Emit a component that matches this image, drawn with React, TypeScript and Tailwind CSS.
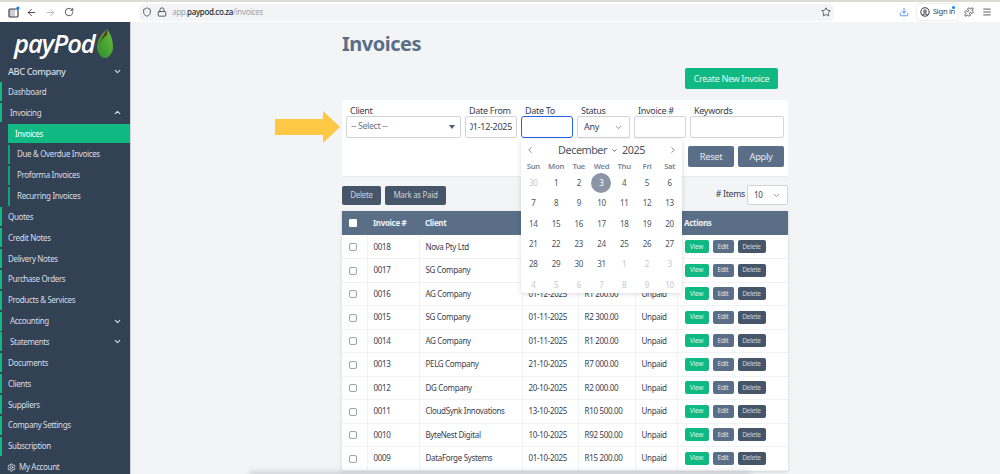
import {
  ArrowLeft,
  ArrowRight,
  ChevronDown,
  ChevronLeft,
  ChevronRight,
  ChevronUp,
  CircleUser,
  Download,
  Lock,
  Menu,
  Puzzle,
  RotateCw,
  Settings,
  Shield,
  Star,
} from "lucide-react";

const NAV = [
  { label: "Dashboard" },
  { label: "Invoicing", chevron: "up", indent: true },
  { label: "Invoices", sub: true, active: true },
  { label: "Due & Overdue Invoices", sub: true },
  { label: "Proforma Invoices", sub: true },
  { label: "Recurring Invoices", sub: true },
  { label: "Quotes" },
  { label: "Credit Notes" },
  { label: "Delivery Notes" },
  { label: "Purchase Orders" },
  { label: "Products & Services" },
  { label: "Accounting", chevron: "down", indent: true },
  { label: "Statements", chevron: "down", indent: true },
  { label: "Documents" },
  { label: "Clients" },
  { label: "Suppliers" },
  { label: "Company Settings" },
  { label: "Subscription" },
];

// the date picker covers date, total and status on the first two rows
const INVOICES = [
  { no: "0018", client: "Nova Pty Ltd", date: "", total: "", status: "" },
  { no: "0017", client: "SG Company", date: "", total: "", status: "" },
  { no: "0016", client: "AG Company", date: "01-12-2025", total: "R1 200.00", status: "Unpaid" },
  { no: "0015", client: "SG Company", date: "01-11-2025", total: "R2 300.00", status: "Unpaid" },
  { no: "0014", client: "AG Company", date: "01-11-2025", total: "R1 200.00", status: "Unpaid" },
  { no: "0013", client: "PELG Company", date: "21-10-2025", total: "R7 000.00", status: "Unpaid" },
  { no: "0012", client: "DG Company", date: "20-10-2025", total: "R2 000.00", status: "Unpaid" },
  { no: "0011", client: "CloudSynk Innovations", date: "13-10-2025", total: "R10 500.00", status: "Unpaid" },
  { no: "0010", client: "ByteNest Digital", date: "10-10-2025", total: "R92 500.00", status: "Unpaid" },
  { no: "0009", client: "DataForge Systems", date: "01-10-2025", total: "R15 200.00", status: "Unpaid" },
];

const WEEKDAYS = ["Sun", "Mon", "Tue", "Wed", "Thu", "Fri", "Sat"];

const CALENDAR = [
  30, 1, 2, 3, 4, 5, 6, 7, 8, 9, 10, 11, 12, 13, 14, 15, 16, 17, 18, 19, 20, 21, 22, 23, 24, 25, 26,
  27, 28, 29, 30, 31, 1, 2, 3, 4, 5, 6, 7, 8, 9, 10,
];

function BrowserBar() {
  return (
    <header className="flex h-[22px] shrink-0 items-center border-t-2 border-[#dedbd5] bg-white text-[#3f3f46]">
      <svg className="ml-[8px] h-[12px] w-[12px]" viewBox="0 0 12 12" fill="none">
        <rect x="1" y="3" width="9" height="8" rx="1" stroke="#3f3f46" strokeWidth="1.2" />
        <rect x="1" y="3" width="6" height="8" fill="#3f3f46" opacity="0.25" />
        <circle cx="10" cy="2" r="1.6" fill="#0a84ff" />
      </svg>
      <ArrowLeft className="ml-[5.5px] h-[11px] w-[11px]" />
      <ArrowRight className="ml-[8px] h-[11px] w-[11px] text-[#b4b4b8]" />
      <RotateCw className="ml-[8.5px] h-[10px] w-[10px]" />
      <div className="ml-[65px] flex h-[17px] w-[695px] items-center rounded-[5px] bg-[#f3f4f6] pl-[3px] pr-[3px]">
        <Shield className="h-[10px] w-[10px]" />
        <Lock className="ml-[5px] h-[10px] w-[10px]" />
        <span className="ml-[5px] text-[8px] tracking-[-0.35px] text-[#9ca3af]">
          app.<span className="font-medium text-[#27272a]">paypod.co.za</span>/invoices
        </span>
        <Star className="ml-auto h-[10px] w-[10px]" />
      </div>
      <Download className="ml-[65px] h-[10px] w-[10px] text-[#3b82f6]" />
      <div className="relative ml-[7px] flex h-[18px] w-[43px] items-center rounded-[4px] border border-[#eeeeee] pl-[3px]">
        <CircleUser className="h-[10px] w-[10px]" strokeWidth={2.5} />
        <span className="ml-[3px] text-[7.6px] tracking-[-0.3px]">Sign in</span>
        <span className="absolute right-[3px] top-[2px] h-[3px] w-[3px] rounded-full bg-[#0a84ff]" />
      </div>
      <Puzzle className="ml-[5px] h-[10px] w-[10px]" />
      <Menu className="ml-[8px] h-[10px] w-[10px]" />
    </header>
  );
}

function Sidebar() {
  return (
    <aside className="flex w-[131px] shrink-0 flex-col border-r border-[#d1d5db] bg-[#334155] text-[8px] tracking-[-0.35px] text-[#d8dde4]">
      <div className="flex h-[41px] shrink-0 items-center pl-[14px] pt-[2px]">
        <span className="font-['Open_Sans',sans-serif] text-[25.5px] font-semibold italic leading-none tracking-[-1px] text-white">
          payPod
        </span>
        <svg className="ml-[1px] h-[31px] w-[18px]" viewBox="0 0 18 31">
          <defs>
            <linearGradient id="leaf" x1="1" y1="0" x2="0" y2="1">
              <stop offset="0" stopColor="#6cc03a" />
              <stop offset="1" stopColor="#2a8a2e" />
            </linearGradient>
          </defs>
          <path d="M11 1C5 7 1 12 1 19c0 6 4 11 8 11s8-5 8-11C17 12 15 6 11 1Z" fill="url(#leaf)" />
          <path d="M11 1C8 7 5 10 3 17c2-5 5-8 8-10 0-2 1-4 0-6Z" fill="#5a3a1e" />
        </svg>
      </div>
      <div className="flex h-[17.5px] shrink-0 items-center justify-between pl-[8px] pr-[8px] text-[9.2px] font-medium tracking-[-0.4px]">
        ABC Company
        <ChevronDown className="h-[9px] w-[9px]" strokeWidth={3} />
      </div>
      <nav className="flex flex-col">
        {NAV.map((item) => (
          <div
            key={item.label}
            className={
              item.sub
                ? item.active
                  ? "ml-[8px] mt-[1.85px] flex h-[19px] items-center bg-[#10b981] pl-[7px] text-white"
                  : "ml-[8px] mt-[1.85px] flex h-[19px] items-center border-l-2 border-[#10a37f] pl-[7px]"
                : "mt-[1.85px] flex h-[19px] items-center justify-between border-l-2 border-[#10b981] pr-[8px]"
            }
          >
            <span className={item.sub ? "" : item.indent ? "pl-[8px]" : "pl-[6px]"}>{item.label}</span>
            {item.chevron === "up" && <ChevronUp className="h-[9px] w-[9px]" strokeWidth={3} />}
            {item.chevron === "down" && <ChevronDown className="h-[9px] w-[9px]" strokeWidth={3} />}
          </div>
        ))}
      </nav>
      <div className="mt-[2px] flex h-[19px] shrink-0 items-center pl-[7px]">
        <Settings className="h-[9px] w-[9px]" strokeWidth={2.5} />
        <span className="ml-[3px]">My Account</span>
      </div>
    </aside>
  );
}

function Field({ label, width, children }: { label: string; width: string; children?: React.ReactNode }) {
  return (
    <div className={width}>
      <div className="ml-[4px] h-[16px] text-[9px] leading-[21px] tracking-[-0.3px] text-[#374151]">{label}</div>
      {children}
    </div>
  );
}

function DatePicker() {
  return (
    <div className="absolute left-[179px] top-[39px] z-10 h-[154px] w-[161px] rounded-[3px] bg-white px-[1px] shadow-[0_1px_5px_rgba(0,0,0,0.15)]">
      <div className="flex h-[21px] items-center justify-between px-[3px] pt-[1px] text-[#6b7280]">
        <ChevronLeft className="h-[10px] w-[10px]" />
        <div className="flex items-center text-[10.8px] tracking-[-0.45px] text-[#4b5563]">
          December
          <ChevronDown className="mx-[4px] h-[7px] w-[7px]" strokeWidth={3} />
          2025
        </div>
        <ChevronRight className="h-[10px] w-[10px]" />
      </div>
      <div className="grid h-[13px] grid-cols-7 items-center text-center text-[7.7px] font-semibold tracking-[-0.3px] text-[#7b8494]">
        {WEEKDAYS.map((d) => (
          <span key={d}>{d}</span>
        ))}
      </div>
      <div className="grid grid-cols-7 text-center text-[8px] tracking-[-0.3px] text-[#4b5563]">
        {CALENDAR.map((day, i) => {
          const muted = i === 0 || i > 31;
          return (
            <span key={i} className="flex h-[20.3px] items-center justify-center">
              {i === 3 ? (
                <span className="flex h-[20px] w-[20px] items-center justify-center rounded-full bg-[#8b95a5] text-white">
                  {day}
                </span>
              ) : (
                <span className={muted ? "text-[#c4c8ce]" : ""}>{day}</span>
              )}
            </span>
          );
        })}
      </div>
    </div>
  );
}

function Filters() {
  const box = "h-[22px] rounded-[2px] border border-[#d1d5db] bg-white";
  return (
    <div className="mt-[11px] h-[76px] bg-white pl-[4px] pr-[4px] shadow-[0_1px_1px_rgba(0,0,0,0.04)]">
      <div className="flex gap-[4px]">
        <Field label="Client" width="w-[115px]">
          <div className={`${box} flex items-center justify-between pl-[4px] pr-[5px] text-[8.8px] tracking-[-0.35px] text-[#6b7280]`}>
            -- Select --
            <span className="h-0 w-0 border-x-[3.5px] border-t-[4px] border-x-transparent border-t-[#4b5e75]" />
          </div>
        </Field>
        <Field label="Date From" width="w-[52px]">
          <div className={`${box} flex items-center justify-end overflow-hidden px-[4px] text-[9px] tracking-[-0.3px] text-[#374151]`}>
            <span className="overflow-hidden">
              <span className="float-right whitespace-nowrap">01-12-2025</span>
            </span>
          </div>
        </Field>
        <Field label="Date To" width="w-[52px]">
          <div className="h-[22px] rounded-[3px] border-[1.5px] border-[#2563eb] bg-white" />
        </Field>
        <Field label="Status" width="w-[53px]">
          <div className={`${box} flex items-center justify-between pl-[6px] pr-[6px] text-[9px] tracking-[-0.3px] text-[#374151]`}>
            Any
            <ChevronDown className="h-[9px] w-[9px] text-[#6b7280]" />
          </div>
        </Field>
        <Field label="Invoice #" width="w-[52px]">
          <div className={box} />
        </Field>
        <Field label="Keywords" width="w-[94px]">
          <div className={box} />
        </Field>
      </div>
      <div className="mt-[8px] flex justify-end gap-[4px]">
        <button className="h-[21px] w-[46px] rounded-[2px] bg-[#5a6f87] text-[9.3px] tracking-[-0.35px] text-[#e5e9ee]">Reset</button>
        <button className="h-[21px] w-[46px] rounded-[2px] bg-[#5a6f87] text-[9.3px] tracking-[-0.35px] text-[#e5e9ee]">Apply</button>
      </div>
    </div>
  );
}

function InvoiceTable() {
  return (
    <table className="mt-[6px] w-[446px] table-fixed border-collapse bg-white text-[8px] tracking-[-0.33px] text-[#374151] shadow-[0_1px_3px_rgba(0,0,0,0.15)]">
      <colgroup>
        <col className="w-[25px]" />
        <col className="w-[52px]" />
        <col className="w-[103px]" />
        <col className="w-[56px]" />
        <col className="w-[57px]" />
        <col className="w-[42px]" />
        <col />
      </colgroup>
      <thead className="bg-[#5a6f87] text-left text-[8px] font-bold text-[#eef1f4]">
        <tr className="h-[24px]">
          <th className="pl-[7px]">
            <span className="block h-[8px] w-[8px] rounded-[1px] bg-white" />
          </th>
          <th className="pl-[6px]">Invoice #</th>
          <th className="pl-[6px]">Client</th>
          <th />
          <th />
          <th />
          <th className="pl-[7px]">Actions</th>
        </tr>
      </thead>
      <tbody>
        {INVOICES.map((r) => (
          <tr key={r.no} className="h-[23.5px] border-b border-[#f1f2f4]">
            <td className="border-r border-[#f1f2f4] pl-[7px]">
              <span className="mt-[1px] block h-[8px] w-[8px] rounded-[2px] border border-[#9ca3af] bg-white" />
            </td>
            <td className="border-r border-[#f1f2f4] pl-[6px]">{r.no}</td>
            <td className="overflow-hidden whitespace-nowrap border-r border-[#f1f2f4] pl-[6px]">{r.client}</td>
            <td className="border-r border-[#f1f2f4] pl-[6px]">{r.date}</td>
            <td className="border-r border-[#f1f2f4] pl-[6px]">{r.total}</td>
            <td className="border-r border-[#f1f2f4] pl-[6px]">{r.status}</td>
            <td className="pl-[7px]">
              <div className="flex gap-[4px] text-[6.6px] tracking-[-0.25px]">
                <span className="flex h-[13px] w-[24px] items-center justify-center rounded-[2px] bg-[#10b981] text-[#d7f5ea]">
                  View
                </span>
                <span className="flex h-[13px] w-[21px] items-center justify-center rounded-[2px] bg-[#5a6f87] text-[#dfe4ea]">
                  Edit
                </span>
                <span className="flex h-[13px] w-[28px] items-center justify-center rounded-[2px] bg-[#475569] text-[#cbd2da]">
                  Delete
                </span>
              </div>
            </td>
          </tr>
        ))}
      </tbody>
    </table>
  );
}

export default function App() {
  return (
    <div className="flex h-[474px] w-[1000px] flex-col overflow-hidden bg-[#f3f4f6] font-['Noto_Sans',sans-serif]">
      <BrowserBar />
      <div className="relative flex min-h-0 flex-1">
        <Sidebar />
        <main className="ml-[211px] w-[446px]">
          <h1 className="mt-[11px] h-[22px] text-[20px] font-bold leading-[22px] tracking-[-0.5px] text-[#5a6f87]">Invoices</h1>
          <div className="mt-[13px] flex justify-end pr-[10px]">
            <button className="h-[21px] w-[93px] rounded-[2px] bg-[#10b981] text-[9px] tracking-[-0.33px] text-[#e3f8f0]">
              Create New Invoice
            </button>
          </div>
          <div className="relative">
            <Filters />
            <DatePicker />
          </div>
          <div className="mt-[9px] flex items-center gap-[4px] tracking-[-0.33px]">
            <button className="h-[19px] w-[39px] rounded-[2px] bg-[#475569] text-[8px] text-[#cbd2da]">Delete</button>
            <button className="h-[19px] w-[61px] rounded-[2px] bg-[#475569] text-[8px] text-[#cbd2da]">
              Mark as Paid
            </button>
            <span className="ml-auto mr-[-2px] text-[8.8px] text-[#374151]">
              # Items
            </span>
            <div className="flex h-[20px] w-[41px] items-center justify-between rounded-[2px] border border-[#d1d5db] bg-white pl-[6px] pr-[6px] text-[8px] text-[#374151]">
              10
              <ChevronDown className="h-[9px] w-[9px] text-[#6b7280]" />
            </div>
          </div>
          <InvoiceTable />
        </main>
        <svg className="absolute left-[275px] top-[89px] h-[32px] w-[65px]" viewBox="0 0 65 32">
          <path d="M0 8h48V0l17 16-17 16v-8H0Z" fill="#fdc844" />
        </svg>
        <div className="absolute bottom-[-6px] left-[250px] h-[8px] w-[500px] bg-[#9ca3af] opacity-50 blur-[3px]" />
      </div>
    </div>
  );
}
